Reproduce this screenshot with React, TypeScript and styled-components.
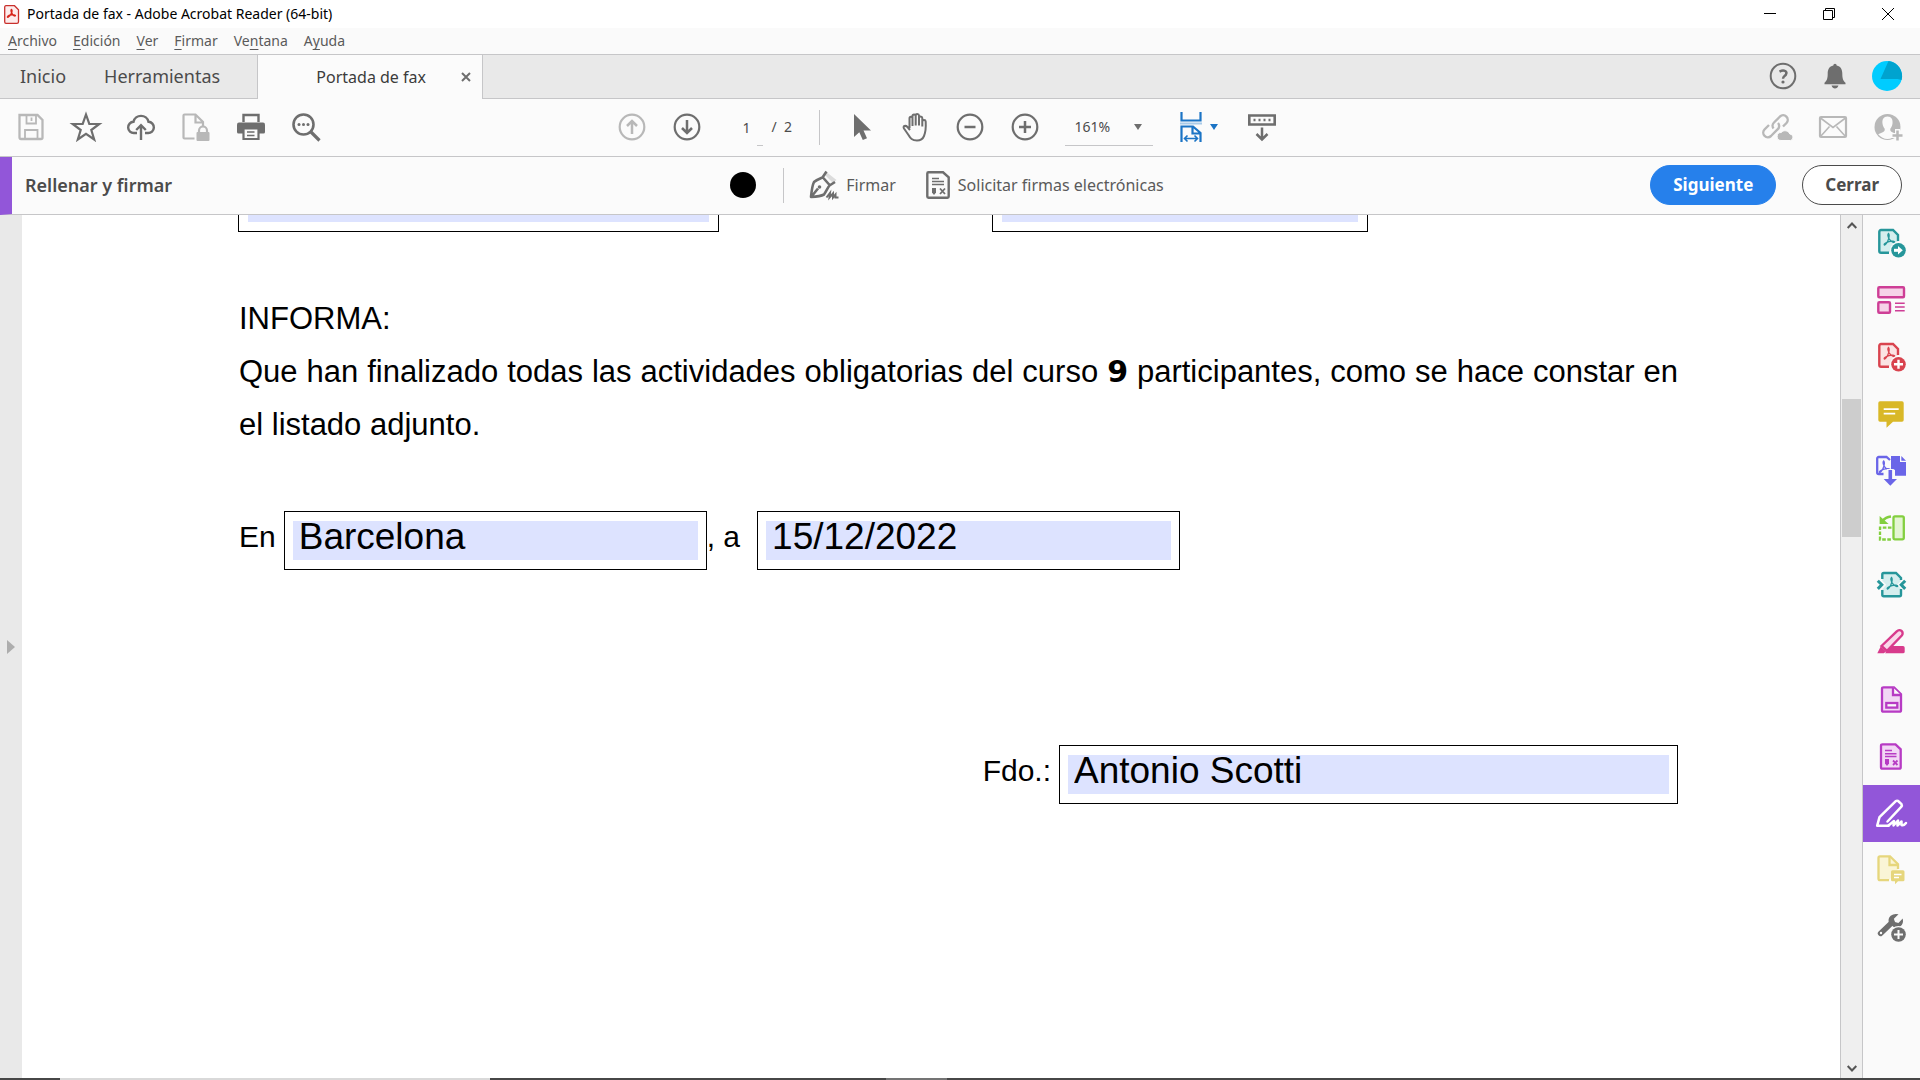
import React from 'react';
import styled, { createGlobalStyle, css } from 'styled-components';

const ui = '"Noto Sans", "Open Sans", sans-serif';
const paper = '"Liberation Sans", Arial, sans-serif';
const dark = '#6e6e6e';
const faint = '#b8b8b8';
const line = '#c6c6c8';
const blue = '#2680eb';
const purple = '#9256d9';

const Global = createGlobalStyle`
  *, *::before, *::after { box-sizing: border-box; }
  body { margin: 0; background: #fff; font-family: ${ui}; color: #4b4b4b; }
  button, input, select { font: inherit; color: inherit; margin: 0; }
  button { border: 0; padding: 0; background: none; cursor: pointer; }
  svg { display: block; overflow: visible; flex: none; }
`;

const Window = styled.div`
  display: flex;
  flex-direction: column;
  height: 100vh;
  overflow: hidden;
`;

const TitleBar = styled.header`
  display: flex;
  align-items: center;
  height: 28px;
  padding: 0 3px 0 4px;
  background: #fff;
  color: #000;
`;
const Title = styled.h1`
  flex: 1;
  margin: 0 0 0 8px;
  font-size: 14px;
  line-height: 20px;
  font-weight: 400;
`;
const CaptionButton = styled.button`
  display: grid;
  place-items: center;
  width: 59px;
  height: 28px;
`;

const MenuBar = styled.nav`
  display: flex;
  gap: 16px;
  align-items: center;
  height: 27px;
  padding-left: 8px;
  background: #fafafa;
  border-bottom: 1px solid ${line};
`;
const MenuItem = styled.button`
  font-size: 14px;
  line-height: 20px;
  color: #5a5a5a;
  text-underline-offset: 3px;
`;

const TabBar = styled.div`
  display: flex;
  height: 44px;
  background: #e9e9e9;
`;
const HomeTabs = styled.div`
  display: flex;
  gap: 38px;
  width: 257px;
  padding: 0 0 1px 20px;
  border-bottom: 1px solid ${line};
`;
const HomeTab = styled.button`
  font-size: 18px;
  line-height: 24px;
`;
const DocumentTab = styled.div`
  display: flex;
  align-items: center;
  justify-content: flex-end;
  gap: 32px;
  width: 226px;
  padding-right: 8px;
  background: #fbfbfb;
  border: solid ${line};
  border-width: 0 1px;
`;
const DocumentName = styled.button`
  font-size: 16px;
  line-height: 24px;
  color: #3c3c3c;
`;
const CloseTab = styled.button`
  display: grid;
  place-items: center;
  width: 16px;
  height: 24px;
`;
const AccountArea = styled.div`
  flex: 1;
  display: flex;
  align-items: center;
  justify-content: flex-end;
  padding: 0 7px 1px 0;
  border-bottom: 1px solid ${line};
`;
const AccountButton = styled.button`
  display: grid;
  place-items: center;
  width: 52px;
  height: 40px;
`;

const bar = css`
  display: grid;
  grid-template-columns: 1fr auto 1fr;
  align-items: center;
  height: 58px;
  background: #fbfbfb;
  border-bottom: 1px solid ${line};
`;
const Toolbar = styled.div`
  ${bar}
  padding: 0 5px 1px 3px;
`;
const ToolGroup = styled.div<{ $end?: boolean; $trail?: number }>`
  display: flex;
  align-items: center;
  justify-content: ${p => (p.$end ? 'flex-end' : 'flex-start')};
  padding-right: ${p => p.$trail ?? 0}px;
`;
const ToolButton = styled.button<{ $dim?: boolean }>`
  display: flex;
  align-items: center;
  justify-content: center;
  gap: 8px;
  width: 55px;
  height: 40px;
  color: ${p => (p.$dim ? faint : dark)};
`;
const Divider = styled.span<{ $after?: number }>`
  width: 1px;
  height: 35px;
  margin-right: ${p => p.$after ?? 0}px;
  background: ${line};
`;
const PageBox = styled.label`
  display: flex;
  align-items: center;
  width: 104px;
  padding-left: 28px;
  font-size: 14px;
  line-height: 20px;
`;
const PageInput = styled.input`
  width: 29px;
  height: 37px;
  padding: 0;
  border: 0;
  background: linear-gradient(${line}, ${line}) 14px 100% / 6px 1px no-repeat;
`;
const ZoomBox = styled.span`
  display: grid;
  align-items: center;
  width: 88px;
  height: 37px;
  margin: 0 19px 0 12px;
  border-bottom: 1px solid ${line};
  > * { grid-area: 1 / 1; }
  > svg { justify-self: end; margin-right: 11px; pointer-events: none; }
`;
const ZoomSelect = styled.select`
  appearance: none;
  height: 32px;
  padding: 0 10px;
  border: 0;
  background: none;
  font-size: 14px;
  line-height: 20px;
`;
const FitWrap = styled.span`
  margin-right: 8px;
`;

const FillBar = styled.div`
  ${bar}
  border-left: 12px solid ${purple};
  padding: 0 18px 1px 0;
`;
const FillTitle = styled.h2`
  margin: 0 0 0 13px;
  font-size: 18px;
  line-height: 24px;
  font-weight: 600;
`;
const FillAction = styled.button`
  display: flex;
  align-items: center;
  gap: 8px;
  height: 40px;
  margin: 0 4px 0 26px;
  font-size: 16px;
  line-height: 24px;
  color: #5a5a5a;
`;
const Swatch = styled.button`
  width: 26px;
  height: 26px;
  margin-right: 27px;
  border-radius: 50%;
  background: #000;
`;
const Pill = styled.button<{ $primary?: boolean }>`
  height: 40px;
  margin-left: 26px;
  padding: 0 22px;
  border-radius: 20px;
  border: 1px solid ${p => (p.$primary ? blue : '#4b4b4b')};
  background: ${p => (p.$primary ? blue : '#fff')};
  color: ${p => (p.$primary ? '#fff' : '#4b4b4b')};
  font-size: 17px;
  line-height: 24px;
  font-weight: 700;
`;

const Workspace = styled.div`
  flex: 1;
  min-height: 0;
  display: flex;
`;
const PanelHandle = styled.button`
  display: grid;
  place-items: center;
  width: 22px;
  background: #e9e9e9;
`;
const Page = styled.main`
  flex: 1;
  min-width: 0;
  overflow: hidden;
  padding: 0 162px 0 217px;
  background: #fff;
  color: #000;
  font-family: ${paper};
  font-size: 30px;
`;
const CutRow = styled.div`
  display: flex;
  gap: 274px;
`;
const CutFrame = styled.div<{ $width: number }>`
  width: ${p => p.$width}px;
  height: 17px;
  margin-left: -1px;
  padding: 0 9px;
  border: 1px solid #000;
  border-top: 0;
`;
const CutInput = styled.input`
  display: block;
  width: 100%;
  height: 7px;
  padding: 0;
  border: 0;
  background: #dde3ff;
`;
const Statement = styled.section`
  margin: 60px 0;
  font-size: 31px;
  line-height: 53px;
`;
const Heading = styled.h2`
  margin: 0;
  font-size: 31px;
  font-weight: 400;
`;
const Paragraph = styled.p`
  margin: 0;
  text-align: justify;
`;
const Count = styled.strong`
  font-family: "DejaVu Sans", sans-serif;
  font-size: 30px;
  font-weight: 700;
  line-height: 1;
`;
const FieldRow = styled.div<{ $end?: boolean }>`
  display: flex;
  justify-content: ${p => (p.$end ? 'flex-end' : 'flex-start')};
  margin-bottom: 175px;
  line-height: 51px;
`;
const FieldLabel = styled.label<{ $wide?: boolean }>`
  padding-right: ${p => (p.$wide ? 17 : 8)}px;
`;
const Frame = styled.div<{ $width: number }>`
  width: ${p => p.$width}px;
  padding: 9px 8px;
  border: 1px solid #000;
`;
const Field = styled.input`
  display: block;
  width: 100%;
  height: 39px;
  padding: 0 6px 8px;
  border: 0;
  background: #dde3ff;
  font-size: 37px;
`;

const ScrollTrack = styled.div`
  display: flex;
  flex-direction: column;
  width: 23px;
  padding: 0 1px;
  border: solid ${line};
  border-width: 0 1px;
  background: #efefef;
`;
const ScrollArrow = styled.button`
  display: grid;
  place-items: center;
  height: 20px;
`;
const ScrollSpace = styled.div`
  flex: 1;
  display: flex;
  flex-direction: column;
`;
const ScrollThumb = styled.div`
  height: 138px;
  margin-top: 164px;
  background: #cdcdcd;
`;
const Rail = styled.aside`
  width: 57px;
  background: #fafafa;
`;
const RailButton = styled.button<{ $on?: boolean }>`
  display: grid;
  place-items: center;
  width: 57px;
  height: 57px;
  background: ${p => (p.$on ? purple : 'none')};
`;
const TaskEdge = styled.footer`
  display: flex;
  height: 2px;
  background: #474747;
`;
const TaskMark = styled.span<{ $start: number; $width: number; $tone: string }>`
  width: ${p => p.$width}px;
  margin-left: ${p => p.$start}px;
  background: ${p => p.$tone};
`;

type IconProps = { size?: number; w?: number; children: React.ReactNode };
const Icon = ({ size = 28, w = 2, children }: IconProps) => (
  <svg width={size} height={size} viewBox={`0 0 ${size} ${size}`} fill="none" stroke="currentColor" strokeWidth={w} aria-hidden="true">
    {children}
  </svg>
);

const Trefoil = ({ x, y, color }: { x: number; y: number; color: string }) => (
  <path
    transform={`translate(${x} ${y})`}
    d="M0 0C1.4 1.6.5 4.6-.6 7.2-1.6 9.6-3.4 12-4.2 11.4-5 10.6-2.4 8.8.4 8.1 3.4 7.4 6.4 7.6 6.2 8.7 5.8 9.8 2.4 8.2.8 5.6-.4 3.4-.8.6 0 0Z"
    fill="none" stroke={color} strokeWidth="1.3"
  />
);

const Caret = ({ color }: { color: string }) => (
  <svg width="8" height="6" viewBox="0 0 8 6" aria-hidden="true"><path d="M0 0h8L4 6z" fill={color} /></svg>
);

const railTools: { name: string; on?: boolean; art: React.ReactNode }[] = [
  { name: 'Exportar PDF', art: <g strokeWidth="2.400">
    <path d="M12 23.700H4a1.700 1.700 0 0 1-1.700-1.700V2.700A1.700 1.700 0 0 1 4 1h12l5 5v6" fill="#d5eeee" stroke="#26969a" />
    <Trefoil x={11.500} y={4.500} color="#26969a" />
    <circle cx="21.500" cy="21.300" r="8.500" fill="#fafafa" stroke="none" /><circle cx="21.500" cy="21.300" r="7.300" fill="#26969a" stroke="none" />
    <path d="M17 21.300h4.500" stroke="#fff" strokeWidth="3" /><path d="M21 17l4.800 4.300L21 25.600z" fill="#fff" stroke="none" /></g> },
  { name: 'Organizar páginas', art: <g stroke="#ce3e96" strokeWidth="2.400">
    <rect x="1.300" y="1.300" width="25.700" height="10" rx="1" fill="#f6d3e8" /><rect x="1.300" y="16.300" width="11.700" height="10.400" rx="1" fill="#f6d3e8" />
    <path d="M18 17.300h9.700M18 21h9.700M18 24.700h9.700" strokeWidth="1.400" /></g> },
  { name: 'Crear PDF', art: <g strokeWidth="2.400">
    <path d="M12 23.700H4a1.700 1.700 0 0 1-1.700-1.700V2.700A1.700 1.700 0 0 1 4 1h12l5 5v6" fill="#fbe3e3" stroke="#d9434e" />
    <Trefoil x={11.500} y={4.500} color="#d9434e" />
    <circle cx="21.500" cy="21.300" r="8.500" fill="#fafafa" stroke="none" /><circle cx="21.500" cy="21.300" r="7.300" fill="#d9434e" stroke="none" />
    <path d="M17 21.300h9M21.500 16.800v9" stroke="#fff" /></g> },
  { name: 'Comentario', art: <>
    <path d="M3 1.300h22q1.700 0 1.700 1.700v17q0 1.700-1.700 1.700H16l-6.500 6v-6H3q-1.700 0-1.700-1.700V3q0-1.700 1.700-1.700z" fill="#d9b827" stroke="none" />
    <path d="M6.700 9.200h15M6.700 13.600h11.500" stroke="#fff" strokeWidth="1.800" /></> },
  { name: 'Combinar archivos', art: <>
    <path d="M6.500 17H1.700A1.500 1.500 0 0 1 .2 15.500V1.500A1.500 1.500 0 0 1 1.700 0H9.500l3.500 3" stroke="#6a65e8" strokeWidth="2.300" />
    <Trefoil x={6.700} y={4} color="#6a65e8" />
    <path d="M14-1h9v6h6v13.700H18v-6h-4z" fill="#6a65e8" stroke="none" /><path d="M24.300-1l4.700 4.700h-4.700z" fill="#6a65e8" stroke="none" />
    <path d="M13.300 12v11" stroke="#fafafa" strokeWidth="7" />
    <path d="M13.300 13v11" stroke="#6a65e8" strokeWidth="3.600" /><path d="M6.700 22H20l-6.700 6.700z" fill="#6a65e8" stroke="none" /></> },
  { name: 'Rotar y ordenar', art: <g stroke="#83cf3f" strokeWidth="2.300">
    <rect x="16.500" y="2.300" width="10.300" height="23" rx="1.500" fill="#e4f5d3" />
    <path d="M14.500 13.700H3V25.500h11.500" strokeDasharray="3.600 1.500" />
    <path d="M14 2.500C9.500 3 7.500 4.500 5.500 7" strokeWidth="2.600" /><path d="M2.600 2v8h9z" fill="#83cf3f" stroke="none" /></g> },
  { name: 'Comprimir PDF', art: <g stroke="#26969a" strokeWidth="2.400">
    <path d="M5.300 2H19l5 5v3l-4 3.700 4 4v7.600H5.300v-7l4-4.500-4-4z" fill="#d5eeee" stroke="none" />
    <path d="M5.300 8V3.500Q5.300 2 6.800 2H19l5 5v2M24 18v5.800q0 1.500-1.500 1.500H6.800q-1.500 0-1.500-1.500V19" />
    <path d="M.8 9.700l4 4.100-4 4.100M28.200 9.700l-4 4.100 4 4.100" strokeWidth="3" />
    <Trefoil x={14.500} y={6.500} color="#26969a" /></g> },
  { name: 'Censurar', art: <>
    <path d="M14 18h12q1.700 0 1.700 1.700v4q0 1.600-1.700 1.600H8z" fill="#d83b8c" stroke="none" />
    <path d="M4.500 18L20 3.200a3 3 0 0 1 4.800 4.300L10 22.800z" fill="#fad9ea" stroke="#d83b8c" strokeWidth="2.400" />
    <path d="M3.700 18.500l5.500 5-2.400 1.800H.3z" fill="#d83b8c" stroke="none" /></> },
  { name: 'Preparar formulario', art: <g stroke="#b73bc4" strokeWidth="2.300">
    <path d="M5 3.800q0-1.500 1.500-1.500H17l7 7v15.900q0 1.500-1.500 1.500h-16Q5 26.700 5 25.200z" fill="#f2d7f5" />
    <path d="M16 2.500V10h8" fill="#fafafa" /><rect x="9.300" y="18" width="11" height="4.600" fill="#fafafa" /></g> },
  { name: 'Solicitar firmas', art: <g stroke="#b73bc4" strokeWidth="2.300">
    <path d="M4 3.800q0-1.500 1.500-1.500h13l5.200 5v17.900q0 1.500-1.500 1.500H5.500Q4 26.700 4 25.200z" fill="#f2d7f5" />
    <path d="M8 8.500h7M8 11.800h11.500M8 14.500h11.500" strokeWidth="1.400" />
    <path d="M8 17h4v4.500L10 24l-2-2.500z" fill="#b73bc4" stroke="none" /><path d="M16 18.500l4.500 4.500M20.500 18.500L16 23" strokeWidth="1.800" /></g> },
  { name: 'Rellenar y firmar', on: true, art: <g stroke="#fff" strokeWidth="2.500" strokeLinecap="round" strokeLinejoin="round">
    <path d="M11.500 26.700H.2l2.300-8.500L18.500 2.300a3 3 0 0 1 2.600-.3l3.400 3.200q.8 1.300-.3 2.700L10.500 22.500" />
    <path d="M11.500 26.500l5.500-4.500-.5 4.500 4.500-5-.5 5 4-4v3.500q2.500.8 4.500-2" /></g> },
  { name: 'Enviar para comentarios', art: <g stroke="#e6d67c" strokeWidth="2.300">
    <path d="M12 24.200H3q-1.500 0-1.500-1.500V2Q1.500.3 3 .3h10l8 8V13" fill="#faf5d6" /><path d="M12.500.5V9H21" />
    <path d="M15.500 14.300H26q1.500 0 1.500 1.500v8q0 1.500-1.500 1.500h-5l-3 3v-3h-2.500q-1.500 0-1.500-1.500v-8q0-1.500 1.500-1.500z" fill="#e6d67c" stroke="none" />
    <path d="M17 18.500h7.500M17 21.500h5" stroke="#fff" strokeWidth="1.300" /></g> },
  { name: 'Más herramientas', art: <>
    <path d="M3.500 20.500L15 9.500" stroke={dark} strokeWidth="5.400" strokeLinecap="round" />
    <path d="M21.500 1.300l-4.600 4.500 1 3.300 3.500.8 4.300-4.500q1.300 5.300-2.500 8-3 2-6.500.7L12 10q-1.500-4.300 1.700-7.200 3.300-2.700 7.800-1.500z" fill={dark} stroke="none" />
    <circle cx="4" cy="20" r="1.200" fill="#fafafa" stroke="none" />
    <circle cx="21.500" cy="21.500" r="8.500" fill="#fafafa" stroke="none" /><circle cx="21.500" cy="21.500" r="7.300" fill={dark} stroke="none" />
    <path d="M17 21.500h9M21.500 17v9" stroke="#fafafa" /></> },
];

export default function App() {
  return (
    <Window>
      <Global />
      <TitleBar>
        <svg width="15" height="19" viewBox="0 0 15 19" aria-hidden="true">
          <path d="M2 .7h8.500l4 4v12q0 1.600-1.600 1.600H2Q.7 18.300.7 16.700V2.300Q.7.700 2 .7z" fill="#fdecec" stroke="#c9302c" strokeWidth="1.300" />
          <path d="M7.500 4.500c1.500 1.200-.8 6.700-3.600 7.800-1.200.2-.2-2.300 3.800-2.600 3.400-.3 4.500 1.200 3.200 1.400C8.500 11 6 5 7.500 4.500z" fill="none" stroke="#d8261c" strokeWidth="1.400" />
        </svg>
        <Title>Portada de fax - Adobe Acrobat Reader (64-bit)</Title>
        <CaptionButton aria-label="Minimizar"><svg width="12" height="12" viewBox="0 0 12 12"><path d="M0 5.500h12" stroke="#000" /></svg></CaptionButton>
        <CaptionButton aria-label="Restaurar"><svg width="12" height="12" viewBox="0 0 12 12" fill="none" stroke="#000"><path d="M.5 2.500h9v9h-9zM2.500 2.500v-2h9v9h-2" /></svg></CaptionButton>
        <CaptionButton aria-label="Cerrar ventana"><svg width="12" height="12" viewBox="0 0 12 12" stroke="#000"><path d="M0 0l12 12M12 0L0 12" /></svg></CaptionButton>
      </TitleBar>

      <MenuBar>
        <MenuItem><u>A</u>rchivo</MenuItem>
        <MenuItem><u>E</u>dición</MenuItem>
        <MenuItem><u>V</u>er</MenuItem>
        <MenuItem><u>F</u>irmar</MenuItem>
        <MenuItem>Ve<u>n</u>tana</MenuItem>
        <MenuItem>A<u>y</u>uda</MenuItem>
      </MenuBar>

      <TabBar>
        <HomeTabs>
          <HomeTab>Inicio</HomeTab>
          <HomeTab>Herramientas</HomeTab>
        </HomeTabs>
        <DocumentTab>
          <DocumentName>Portada de fax</DocumentName>
          <CloseTab aria-label="Cerrar pestaña"><svg width="8" height="8" viewBox="0 0 8 8" stroke={dark} strokeWidth="2"><path d="M0 0l8 8M8 0L0 8" /></svg></CloseTab>
        </DocumentTab>
        <AccountArea>
          <AccountButton aria-label="Ayuda"><svg width="28" height="28" viewBox="0 0 28 28" fill="none" stroke={dark} strokeWidth="2">
            <circle cx="14" cy="14" r="12.300" /><path d="M10.500 9.600q3.300-1.800 5.700-.6 2 1.400.8 3.500c-.9 1.400-3 2-3 4.300" strokeWidth="2.400" /><circle cx="14" cy="20" r="1.600" fill={dark} stroke="none" /></svg></AccountButton>
          <AccountButton aria-label="Notificaciones"><svg width="22" height="26" viewBox="0 0 22 26" fill={dark}>
            <path d="M9.300 2.500Q9.300.8 11 .8t1.700 1.700c4 .8 5.600 4 5.600 8 0 5 .7 7 3.200 9.200v1.500H.5v-1.500c2.500-2.200 3.200-4.200 3.200-9.200 0-4 1.600-7.200 5.600-8zM7.500 22.500h7Q13.500 25.500 11 25.500t-3.500-3z" /></svg></AccountButton>
          <AccountButton aria-label="Cuenta"><svg width="30" height="30" viewBox="0 0 30 30">
            <circle cx="15" cy="15" r="15" fill="#00ccff" /><path d="M16.500.1A15 15 0 0 1 29.600 19l-4-1H8.500z" fill="#00a3cf" /></svg></AccountButton>
        </AccountArea>
      </TabBar>

      <Toolbar>
        <ToolGroup>
          <ToolButton $dim aria-label="Guardar"><Icon w={2.300}><path d="M2.500 2h18l5 5v17.500q0 1.500-1.500 1.500H4q-1.500 0-1.500-1.500z" /><path d="M9.500 2v8.500h9.500V2M14.500 4.500v3.500M8 26v-9h12.500v9" strokeWidth="1.800" /></Icon></ToolButton>
          <ToolButton aria-label="Destacar"><Icon><path d="M14 1.500l3.300 9.300 10 .2-8 6 2.900 9.500-8.200-5.600-8.200 5.600 2.900-9.500-8-6 10-.2z" strokeWidth="2.200" /></Icon></ToolButton>
          <ToolButton aria-label="Subir a la nube"><Icon w={2.400}><path d="M10 20H7a5.600 5.600 0 0 1-.5-11.200 7.700 7.700 0 0 1 15 0A5.600 5.600 0 0 1 21 20h-3" /><path d="M14 27V13M9.200 17l4.800-4.800 4.800 4.800" /></Icon></ToolButton>
          <ToolButton $dim aria-label="Proteger"><Icon w={2.200}><path d="M12.500 25.500H2.500q-1 0-1-1V2.500q0-1 1-1h11l7.500 7.500V13M13.500 2v7.500h7.500" /><rect x="14.500" y="19" width="13" height="9" rx="1" fill="currentColor" stroke="none" /><path d="M17 19v-1.500a4 4 0 0 1 8 0V19" /></Icon></ToolButton>
          <ToolButton aria-label="Imprimir"><Icon><path d="M6.500 9V2h15v7" strokeWidth="2.400" /><path d="M2 9.500h24q2 0 2 2V19q0 1.500-1.500 1.500h-25Q0 20.500 0 19v-7.500q0-2 2-2z" fill="currentColor" stroke="none" /><path d="M6.500 15.500h15V26h-15z" fill="#fbfbfb" strokeWidth="2.200" /><path d="M10 19h7.500M10 22.500h7.500" strokeWidth="1.600" /></Icon></ToolButton>
          <ToolButton aria-label="Buscar"><Icon w={2.600}><circle cx="11.500" cy="11.500" r="10" /><path d="M19 19l8.500 8.500" strokeWidth="3.200" /><g fill="currentColor" stroke="none"><circle cx="7" cy="11.500" r="1.500" /><circle cx="11.500" cy="11.500" r="1.500" /><circle cx="16" cy="11.500" r="1.500" /></g></Icon></ToolButton>
        </ToolGroup>

        <ToolGroup $trail={24}>
          <ToolButton $dim aria-label="Página anterior"><Icon w={2.200}><circle cx="14" cy="14" r="12.300" /><path d="M14 21V8.500M9 13l5-5 5 5" strokeWidth="2.500" /></Icon></ToolButton>
          <ToolButton aria-label="Página siguiente"><Icon w={2.200}><circle cx="14" cy="14" r="12.300" /><path d="M14 7v12.500M9 15l5 5 5-5" strokeWidth="2.500" /></Icon></ToolButton>
          <PageBox><PageInput defaultValue="1" aria-label="Página" />/&nbsp; 2</PageBox>
          <Divider $after={13} />
          <ToolButton aria-label="Seleccionar"><Icon><path d="M8 1v23l5.300-4.700 3.500 7.700 4.200-1.800-3.500-7.700H25z" fill="currentColor" stroke="none" /></Icon></ToolButton>
          <ToolButton aria-label="Mano"><Icon><path d="M7.500 15V5.500q0-1.700 1.500-1.700t1.500 1.700V13M10.500 5V3q0-1.600 1.600-1.600T13.700 3v9.500M13.700 4V2.500Q13.700.9 15.300.9t1.700 1.600V12.500M17 5q0-1.600 1.600-1.600T20.300 5v8.500M20.300 8.500q.1-1.500 1.700-1.500t1.700 1.500c.4 7 0 10.500-1.700 14.500-1 2.500-3 4.500-7 4.500-5 0-6.500-2-8.500-5.500L2 15.500q-1-2 .5-2.500t3 1l2.500 3" transform="translate(1 0)" strokeWidth="2" strokeLinejoin="round" /></Icon></ToolButton>
          <ToolButton aria-label="Reducir"><Icon w={2.200}><circle cx="14" cy="14" r="12.300" /><path d="M8.500 14h11" strokeWidth="2.500" /></Icon></ToolButton>
          <ToolButton aria-label="Ampliar"><Icon w={2.200}><circle cx="14" cy="14" r="12.300" /><path d="M8 14h12M14 8v12" strokeWidth="2.500" /></Icon></ToolButton>
          <ZoomBox>
            <ZoomSelect aria-label="Zoom" defaultValue="161%"><option>161%</option></ZoomSelect>
            <Caret color={dark} />
          </ZoomBox>
          <FitWrap>
            <ToolButton aria-label="Ajustar al ancho">
              <svg width="22" height="30" viewBox="0 0 22 30" fill="none" stroke="#1b74c5" strokeWidth="2.200"><path d="M1.500 0v8.500h19V0" /><path d="M0 11.500h22" stroke="#a9cbe9" strokeWidth="2" /><path d="M1.500 30V14.500h11.500l7.500 6.500v9M12.500 15v6.500h8" /><path d="M4.500 26.500h13M7.500 23.500l-3 3 3 3M14.500 23.500l3 3-3 3" strokeWidth="1.600" /></svg>
              <Caret color="#1b74c5" />
            </ToolButton>
          </FitWrap>
          <ToolButton aria-label="Desplazamiento"><Icon><path d="M1.300 2.500h25.400v9H1.300z" strokeWidth="2.600" /><path d="M5.500 7h17" strokeWidth="2.600" strokeDasharray="2 3" /><path d="M14 14.500v12M8.500 21l5.500 5.500 5.500-5.500" strokeWidth="2.500" /></Icon></ToolButton>
        </ToolGroup>

        <ToolGroup $end>
          <ToolButton $dim aria-label="Compartir vínculo"><Icon w={2.400}><path d="M11.500 15.500a4.500 4.500 0 0 1 .5-6l6-6a4.600 4.600 0 0 1 6.500 6.500L21 13.500M16 10a4.500 4.500 0 0 1-.5 6.500L9 23a4.600 4.600 0 0 1-6.500-6.500L7 12" transform="translate(-2 0)" /><path d="M17 27.500a4 4 0 0 1 .3-8 5 5 0 0 1 8.500 1.500 3.300 3.300 0 0 1 .7 6.500z" fill="currentColor" stroke="#fbfbfb" strokeWidth="1" /></Icon></ToolButton>
          <ToolButton $dim aria-label="Correo"><Icon w={2.200}><rect x="1" y="4" width="26" height="20" rx="1" /><path d="M1.500 5l12.500 9.500L26.500 5M1.500 23.500l9-10M26.500 23.500l-9-10" strokeWidth="1.600" /></Icon></ToolButton>
          <ToolButton $dim aria-label="Añadir personas"><Icon><circle cx="13.500" cy="14" r="13" fill="currentColor" stroke="none" /><path d="M13.500 3.500c4 0 5.500 3 5 7-.3 2.500-1.200 4-2.200 5.300-.3 2 .3 2.800 2.500 3.700l4 1.800q-4 4.700-9.300 4.700t-9.300-4.700l4-1.800c2.200-.9 2.800-1.700 2.500-3.700-1-1.300-1.900-2.800-2.200-5.300-.5-4 1-7 5-7z" fill="#fbfbfb" stroke="none" /><path d="M23.500 16v12M17.500 22.500h12" stroke="#fbfbfb" strokeWidth="5" /><path d="M23.500 17.500v10M18.500 22.500h10" strokeWidth="2.500" /></Icon></ToolButton>
        </ToolGroup>
      </Toolbar>

      <FillBar>
        <FillTitle>Rellenar y firmar</FillTitle>
        <ToolGroup $trail={16}>
          <Swatch aria-label="Color" />
          <Divider />
          <FillAction><Icon><path d="M17 1.500l9.500 7.500-3.500 3-8-8z" fill="#dcdcdc" stroke="none" /><path d="M16.500.5L12.500 6.500C9 8 6 9 4 11 2 15 1.500 21 1 26 6 25.700 11 25.200 14 23.500 16.500 20 17.500 17 19.500 14.500L25 11M12.500 6L20 14.500M1.500 25.500l6.500-8" stroke={dark} strokeWidth="2.600" strokeLinejoin="round" /><circle cx="9.500" cy="16" r="1.800" fill={dark} stroke="none" /><path d="M16.500 26.500l3.500-4.500-.5 4.500 3.500-4v4l2.500-3v3h3" stroke={dark} strokeWidth="2" /></Icon>Firmar</FillAction>
          <FillAction><svg width="24" height="28" viewBox="0 0 24 28" fill="none" stroke={dark} strokeWidth="2.400"><path d="M1.300 2.500q0-1.200 1.200-1.200h14.500l5.700 5v19.200q0 1.200-1.200 1.200h-19q-1.200 0-1.200-1.200z" /><path d="M6 7.500h7M6 10.500h12M6 13.500h12" strokeWidth="1.500" /><path d="M6 17h4v4.500L8 24l-2-2.500z" fill={dark} stroke="none" /><path d="M14 17.500l5 5.500M19 17.500l-5 5.500" strokeWidth="1.800" /></svg>Solicitar firmas electrónicas</FillAction>
        </ToolGroup>
        <ToolGroup $end>
          <Pill $primary>Siguiente</Pill>
          <Pill>Cerrar</Pill>
        </ToolGroup>
      </FillBar>

      <Workspace>
        <PanelHandle aria-label="Mostrar panel"><svg width="8" height="14" viewBox="0 0 8 14"><path d="M0 0l8 7-8 7z" fill="#adadad" /></svg></PanelHandle>
        <Page>
          <CutRow>
            <CutFrame $width={481}><CutInput aria-label="Campo superior izquierdo" /></CutFrame>
            <CutFrame $width={376}><CutInput aria-label="Campo superior derecho" /></CutFrame>
          </CutRow>
          <Statement>
            <Heading>INFORMA:</Heading>
            <Paragraph>
              Que han finalizado todas las actividades obligatorias del curso <Count>9</Count> participantes, como se hace constar en el&nbsp;listado adjunto.
            </Paragraph>
          </Statement>
          <FieldRow>
            <FieldLabel htmlFor="city">En</FieldLabel>
            <Frame $width={423}><Field id="city" defaultValue="Barcelona" /></Frame>
            <FieldLabel htmlFor="date" $wide>, a</FieldLabel>
            <Frame $width={423}><Field id="date" defaultValue="15/12/2022" /></Frame>
          </FieldRow>
          <FieldRow $end>
            <FieldLabel htmlFor="signer">Fdo.:</FieldLabel>
            <Frame $width={619}><Field id="signer" defaultValue="Antonio Scotti" /></Frame>
          </FieldRow>
        </Page>
        <ScrollTrack>
          <ScrollArrow aria-label="Subir"><svg width="10" height="7" viewBox="0 0 10 7" fill="none" stroke="#555" strokeWidth="2"><path d="M.7 6L5 1.500 9.300 6" /></svg></ScrollArrow>
          <ScrollSpace><ScrollThumb /></ScrollSpace>
          <ScrollArrow aria-label="Bajar"><svg width="10" height="7" viewBox="0 0 10 7" fill="none" stroke="#555" strokeWidth="2"><path d="M.7 1L5 5.500 9.300 1" /></svg></ScrollArrow>
        </ScrollTrack>
        <Rail>
          {railTools.map(t => (
            <RailButton key={t.name} $on={t.on} aria-label={t.name}><Icon size={29}>{t.art}</Icon></RailButton>
          ))}
        </Rail>
      </Workspace>
      <TaskEdge>
        <TaskMark $start={60} $width={430} $tone="#d9d9d9" />
        <TaskMark $start={396} $width={61} $tone="#747474" />
      </TaskEdge>
    </Window>
  );
}
